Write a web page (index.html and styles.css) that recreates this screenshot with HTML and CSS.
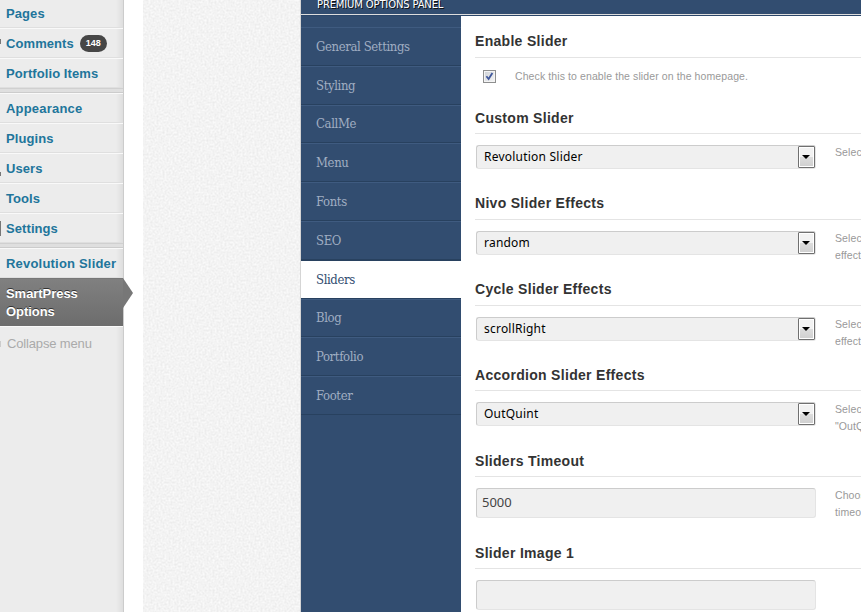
FILE: index.html
```html
<!DOCTYPE html>
<html lang="en">
<head>
<meta charset="utf-8">
<title>SmartPress Options</title>
<link rel="stylesheet" href="styles.css">
</head>
<body>
<div class="app">
  <aside class="admin-menu">
    <a class="item first"><span>Pages</span></a>
    <a class="item"><i class="stub round"></i><span>Comments</span><b class="count">148</b></a>
    <a class="item"><span>Portfolio Items</span></a>
    <div class="separator"></div>
    <a class="item wide"><span>Appearance</span></a>
    <a class="item"><span>Plugins</span></a>
    <a class="item"><i class="stub foot"></i><span>Users</span></a>
    <a class="item"><span>Tools</span></a>
    <a class="item"><i class="stub bar"></i><span>Settings</span></a>
    <div class="separator"></div>
    <a class="item wide"><span>Revolution Slider</span></a>
    <a class="item current">SmartPress<br>Options
      <svg class="pointer" width="10" height="30" viewBox="0 0 10 30"><path d="M0 0L10 15L0 30Z" fill="#777"/></svg></a>
    <a class="collapse"><i class="stub pale"></i>Collapse menu</a>
  </aside>
  <div class="gutter"></div>
  <div class="texture">
    <svg width="158" height="612">
      <filter id="grain" x="0" y="0" width="100%" height="100%" color-interpolation-filters="sRGB">
        <feTurbulence type="fractalNoise" baseFrequency=".5" numOctaves="2" seed="4"/>
        <feColorMatrix values=".1 0 0 0 .903  .1 0 0 0 .903  .1 0 0 0 .903  0 0 0 0 1"/>
      </filter>
      <rect width="158" height="612" filter="url(#grain)"/>
    </svg>
  </div>
  <main class="panel">
    <header class="panel-head"><span>PREMIUM OPTIONS PANEL</span></header>
    <div class="panel-body">
      <nav class="tabs">
        <a><span>General Settings</span></a>
        <a><span>Styling</span></a>
        <a><span>CallMe</span></a>
        <a><span>Menu</span></a>
        <a><span>Fonts</span></a>
        <a><span>SEO</span></a>
        <a class="active"><span>Sliders</span></a>
        <a><span>Blog</span></a>
        <a><span>Portfolio</span></a>
        <a><span>Footer</span></a>
      </nav>
      <div class="form">
        <section class="option toggle">
          <h3>Enable Slider</h3>
          <div class="row">
            <span class="check"><svg width="9" height="9" viewBox="0 0 9 9"><path d="M1.4 4.3L3.6 7L7.4 1" fill="none" stroke="#3f579c" stroke-width="1.8"/></svg></span>
            <p>Check this to enable the slider on the homepage.</p>
          </div>
        </section>
        <section class="option">
          <h3 class="low">Custom Slider</h3>
          <div class="row"><div class="select"><span>Revolution Slider</span><i class="drop"></i></div><p>Select</p></div>
        </section>
        <section class="option">
          <h3>Nivo Slider Effects</h3>
          <div class="row"><div class="select"><span>random</span><i class="drop"></i></div><p>Select<br>effect</p></div>
        </section>
        <section class="option short">
          <h3>Cycle Slider Effects</h3>
          <div class="row"><div class="select"><span>scrollRight</span><i class="drop"></i></div><p>Select<br>effect</p></div>
        </section>
        <section class="option">
          <h3 class="low">Accordion Slider Effects</h3>
          <div class="row"><div class="select"><span>OutQuint</span><i class="drop"></i></div><p>Select<br>"OutQuint"</p></div>
        </section>
        <section class="option tall">
          <h3 class="low">Sliders Timeout</h3>
          <div class="row"><div class="input">5000</div><p>Choose<br>timeout</p></div>
        </section>
        <section class="option">
          <h3 class="low">Slider Image 1</h3>
          <div class="row"><div class="input"></div></div>
        </section>
      </div>
    </div>
  </main>
</div>
</body>
</html>
```
FILE: styles.css
```css
* { box-sizing: border-box; }
body { margin: 0; background: #fff; font-family: "Liberation Sans", Arial, sans-serif; }
.app { display: flex; width: 861px; height: 612px; overflow: hidden; }

/* Admin menu */
.admin-menu {
  flex: none; width: 124px; height: 612px;
  background: linear-gradient(90deg, transparent 116px, #dedede 123px) #ececec;
  border-right: 1px solid #ccc;
  font-size: 13px; letter-spacing: .08px;
}
.item {
  position: relative; display: flex; align-items: center;
  height: 30px; padding-left: 6px;
  border-top: 1px solid #f9f9f9; border-bottom: 1px solid #dfdfdf;
  color: #21759b; font-weight: bold; white-space: nowrap;
}
.item.first { height: 28px; border-top: 0; }
.item.wide { letter-spacing: .2px; }
.count {
  margin-left: 6px; width: 27px; height: 17px; border-radius: 9px;
  background: #464646; color: #fff; font-size: 9px; line-height: 17px; text-align: center; letter-spacing: 0;
}
.separator { height: 5px; background: #dfdfdf; border-top: 1px solid #d0d0d0; border-bottom: 1px solid #ccc; }
.item.current {
  display: block; height: 48px; padding: 6px 0 0 6px; line-height: 18px;
  background: linear-gradient(#808080, #6d6d6d); border-color: #777 transparent #6d6d6d;
  color: #fff; text-shadow: 0 -1px 0 #333; letter-spacing: -.05px;
}
.pointer { position: absolute; left: 123px; top: -1px; }
.collapse { position: relative; display: block; padding-left: 7px; border-top: 1px solid #f9f9f9; line-height: 34px; color: #aaa; letter-spacing: -.15px; }
.stub { position: absolute; left: 0; background: #777; }
.stub.round { top: 10px; width: 1px; height: 5px; }
.stub.foot { top: 18px; width: 1px; height: 4px; }
.stub.bar { top: 7px; width: 1px; height: 15px; }
.stub.pale { top: 14px; width: 1px; height: 6px; background: #ccc; }

.gutter { flex: none; width: 19px; background: #fff; }
.texture { flex: none; width: 158px; height: 612px; background: #f3f3f3; border-right: 1px solid #d5d5d5; overflow: hidden; }
.texture svg { display: block; }

/* Options panel */
.panel { flex: 1; min-width: 0; height: 612px; display: flex; flex-direction: column; overflow: hidden; }
.panel-head {
  flex: none; height: 16px; padding-left: 16px; overflow: hidden;
  background: linear-gradient(#324d70 14px, #ddd 14px, #ddd 15px, #2b4669 15px);
  color: #fff; font: 10px/10px "DejaVu Sans", sans-serif; text-shadow: 1px 1px 0 #111; white-space: nowrap;
}
.panel-head span { display: block; letter-spacing: -.15px; }
.panel-body { flex: 1; display: flex; min-height: 0; }
.tabs {
  flex: none; width: 160px; padding-top: 11px; background: #324d70;
  font-family: "DejaVu Serif Condensed", "DejaVu Serif", serif; font-stretch: condensed;
  font-size: 13px; letter-spacing: -.38px; color: #a0aec2;
}
.tabs a {
  display: flex; align-items: center; height: 38.8px; padding: 0 0 0 15px;
  border-top: 1px solid #3f5b80; border-bottom: 1px solid #28415f;
}
.tabs .active { background: #fff; color: #324d70; border-top-color: #28415f; }

.form { flex: 1; min-width: 0; padding: 14px 0 0 14px; overflow: hidden; }
.option { height: 86px; }
.option.toggle { height: 76px; }
.option.short { height: 85px; }
.option.tall { height: 92px; }
.option h3 {
  margin: 0; height: 28px; border-bottom: 1px solid #e4e4e4;
  font-size: 14px; line-height: 23px; color: #333; letter-spacing: .3px; white-space: nowrap;
}
.option .low { padding-top: 1px; }
.row { display: flex; align-items: flex-start; padding: 11px 0 0 1px; }
.row p { margin: -1px 0 0 19px; font-size: 10.5px; line-height: 17px; color: #999; letter-spacing: .1px; white-space: nowrap; }
.check {
  flex: none; width: 13px; height: 13px; margin: 1px 0 0 7px; padding: 1px;
  border: 1px solid #8e8f8f; background: linear-gradient(135deg, #ccd0d5, #f6f6f6); box-shadow: inset 0 0 0 1px #f4f4f4;
}
.check svg { display: block; }
.select, .input {
  flex: none; display: flex; width: 340px; background: #f0f0f0;
  border: 1px solid; border-color: #ccc #e4e4e4 #e4e4e4 #ccc; border-radius: 3px;
}
.select { height: 24px; font: 12px/22px "Noto Sans", sans-serif; letter-spacing: .22px; color: #000; padding-left: 7px; justify-content: space-between; }
.drop {
  display: flex; align-items: center; justify-content: center; width: 17px; height: 22px;
  border: 1px solid #707070; background: linear-gradient(#f2f2f2 50%, #ddd 50%, #cfcfcf); box-shadow: inset 0 0 0 1px #fff; border-radius: 1px;
}
.drop::after { content: ""; margin-right: 1px; border: 4px solid transparent; border-top-color: #000; border-bottom: 0; }
.input { height: 30px; padding-left: 5px; font: 13px/27px "Noto Sans", sans-serif; color: #444; }
```
